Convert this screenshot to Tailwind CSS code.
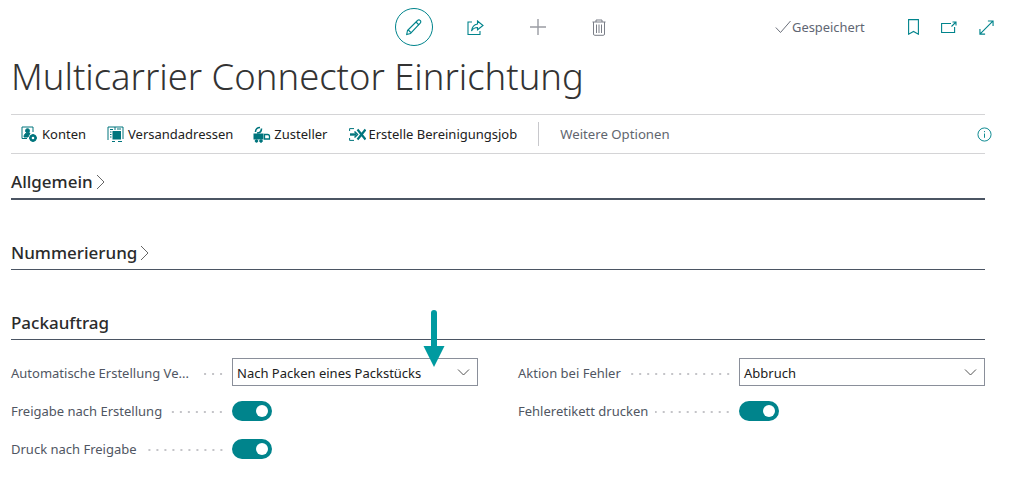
<!DOCTYPE html>
<html lang="de">
<head>
  <meta charset="UTF-8">
  <title>Multicarrier Connector Einrichtung</title>
  <script src="https://cdn.jsdelivr.net/npm/@tailwindcss/browser@4"></script>
</head>
<body class="bg-white w-[1010px] h-[488px] overflow-hidden relative font-['Noto_Sans','Open_Sans',sans-serif] text-[#212121]">
  <!-- top bar -->
  <div class="h-[54px] flex items-center">
    <div class="w-[395px] shrink-0"></div>
    <button class="w-[38px] h-[38px] rounded-full border border-[#00848c] flex items-center justify-center">
      <svg class="w-[18px] h-[18px]" viewBox="0 0 18 18" fill="none" stroke="#00848c" stroke-width="1.1"><path d="M2.500 12.500 12.500 2.500a1.800 1.800 0 0 1 2.700 0 1.800 1.800 0 0 1 0 2.700L5.500 15.500l-3.800 1Z"/><path d="M11 4l3 3M3.300 12l2.500 2.500"/></svg>
    </button>
    <svg class="w-[17px] h-[15px] ml-[34px]" viewBox="0 0 17 15" fill="none" stroke="#00848c" stroke-width="1.1"><path d="M5 2H1v12.500h12V11"/><path d="M10.500 1 16 5.500l-5.500 4.300V7.500C8 7.500 6 8.500 4.500 11 5 7.500 7 4.500 10.500 4Z"/></svg>
    <svg class="w-[18px] h-[18px] ml-[45px]" viewBox="0 0 18 18" stroke="#9a9ca3" stroke-width="1.400"><path d="M9 1v16M1 9h16"/></svg>
    <svg class="w-[14px] h-[17px] ml-[45px]" viewBox="0 0 14 17" fill="none" stroke="#7b7f88" stroke-width="1"><path d="M.5 3h13M4 3V1h6v2M1.500 3v12a1.300 1.300 0 0 0 1.300 1.300h8.400a1.300 1.300 0 0 0 1.300-1.300V3M4.500 5.500V14M7 5.500V14M9.500 5.500V14"/></svg>
    <svg class="w-[16px] h-[14px] ml-[169px]" viewBox="0 0 16 14" fill="none" stroke="#6a6f7a" stroke-width="1"><path d="M.8 7.500 5.500 12.500 15.500 1"/></svg>
    <span class="ml-[1px] pt-[2px] text-[12.9px] text-[#5f6673] whitespace-nowrap">Gespeichert</span>
    <svg class="w-[11px] h-[16px] ml-[43px]" viewBox="0 0 11 16" fill="none" stroke="#00848c" stroke-width="1.100"><path d="M.6.600h9.800v14.600L5.500 12.500.6 15.200Z"/></svg>
    <svg class="w-[16px] h-[12px] ml-[22px] mb-[1px]" viewBox="0 0 16 12" fill="none" stroke="#00848c" stroke-width="1.100"><path d="M10 2.500H.6v9h13V6M10.500 5.500 15 1M11.500 1H15v3.500"/></svg>
    <svg class="w-[15px] h-[15px] ml-[22px]" viewBox="0 0 16 16" fill="none" stroke="#00848c" stroke-width="1.200"><path d="M1 15 15 1M9.500 1H15v5.500M1 9.500V15h5.500"/></svg>
  </div>

  <div class="px-[11px] w-[996px]">
    <h1 class="text-[36.4px] leading-[42px] font-light text-[#333] mt-[1px] h-[59px] whitespace-nowrap">Multicarrier Connector Einrichtung</h1>

    <!-- action bar -->
    <div class="h-[40px] border-y border-[#d4d4d6] flex items-center text-[13px] pl-[10px]">
      <div class="flex items-center gap-[4px]">
        <svg class="w-[17px] h-[17px]" viewBox="0 0 17 17" fill="none" stroke="#00757d"><path d="M6 12.500H1V1h11v5"/><circle cx="6.500" cy="4.700" r="2" fill="#00757d"/><path d="M3 11c0-2.500 1.500-4 3.500-4H9L7 11Z" fill="#00757d"/><circle cx="12" cy="12" r="2.500" stroke-width="2.400"/><path d="M12 8v1M12 15v1M8 12h1M15 12h1" stroke-width="1.400"/></svg>
        <span class="pt-[2px]">Konten</span>
      </div>
      <div class="flex items-center gap-[3px] ml-[21px]">
        <svg class="w-[17px] h-[16px]" viewBox="0 0 17 16" fill="none" stroke="#00757d"><path d="M1 14V1h15v12M8 1v3M3 3.500h3M3 6h1.500M3 8.500h1.500M3 11h1.500M10 3h4"/><rect x="6" y="5.500" width="7.500" height="7.500" fill="#00757d"/><path d="M5 15.500h3M11 15.500h4"/></svg>
        <span class="pt-[2px] ml-[1px]">Versandadressen</span>
      </div>
      <div class="flex items-center gap-[3px] ml-[20px]">
        <svg class="w-[18px] h-[17px]" viewBox="0 0 18 17" fill="none" stroke="#00757d"><path d="M2.500 6c0-3 2-4.500 4.500-4.500M8.500 2.500c0 3-2 4.500-4.500 4.500" stroke-width="1.600"/><rect x="1" y="8" width="9" height="5" fill="#00757d"/><path d="M11.500 8.500h3a2 2 0 0 1 2 2v2.500h-5Z" stroke-width="1.300"/><circle cx="3.500" cy="15" r="1.300" fill="#00757d"/><circle cx="8" cy="15" r="1.300" fill="#00757d"/></svg>
        <span class="pt-[2px]">Zusteller</span>
      </div>
      <div class="flex items-center gap-[3px] ml-[21px]">
        <svg class="w-[17px] h-[13px]" viewBox="0 0 17 13" fill="none" stroke="#00757d"><path d="M5 .6H.6v2.400M.6 10v2.400H5"/><path d="M1 6.500h6" stroke-width="2.400"/><path d="M5.500 3.500 8.500 6.500l-3 3" stroke-width="1.500"/><path d="m8.500 1.500 8 10M16.500 1.500l-8 10" stroke-width="2.200"/></svg>
        <span class="pt-[2px]">Erstelle Bereinigungsjob</span>
      </div>
      <div class="w-px h-[24px] bg-[#c8c8cc] ml-[21px]"></div>
      <span class="ml-[21px] pt-[2px] text-[13.2px] text-[#61656e]">Weitere Optionen</span>
      <svg class="w-[15px] h-[15px] ml-auto mr-[-7px]" viewBox="0 0 16 16" fill="none" stroke="#00848c"><circle cx="8" cy="8" r="7"/><path d="M8 7v4.500M8 4.300v1.200"/></svg>
    </div>

    <!-- collapsed sections -->
    <div class="h-[46px] border-b-2 border-[#4b5563] flex items-end pb-[4px] text-[17px] font-medium text-[#2b2b2b]">
      <span>Allgemein</span>
      <svg class="w-[9px] h-[16px] ml-[3px] mb-[4px]" viewBox="0 0 9 16" fill="none" stroke="#666"><path d="m1 1 7 7-7 7"/></svg>
    </div>
    <div class="h-[70px] border-b border-[#4b5563] flex items-end pb-[4px] text-[17px] font-medium text-[#2b2b2b]">
      <span>Nummerierung</span>
      <svg class="w-[9px] h-[16px] ml-[3px] mb-[4px]" viewBox="0 0 9 16" fill="none" stroke="#666"><path d="m1 1 7 7-7 7"/></svg>
    </div>
    <div class="h-[70px] border-b border-[#4b5563] flex items-end pb-[4px] text-[17px] font-medium text-[#2b2b2b]">
      <span>Packauftrag</span>
    </div>

    <!-- fields -->
    <div class="grid grid-cols-[467px_467px] gap-x-[40px] pt-[18px] text-[13px]">
      <div class="flex flex-col">
        <div class="h-[28px] flex items-center text-[#505662]">
          <span class="whitespace-nowrap pt-[3px]">Automatische Erstellung Ve...</span>
          <span class="flex-1 ml-[11px] mr-[7px] h-[4px] mt-[3px] bg-[radial-gradient(circle,#c4c4c8_1px,transparent_1.2px)] bg-[length:8px_4px] bg-repeat-x bg-right"></span>
          <div class="w-[246px] h-[28px] shrink-0 border border-[#8a8f9a] flex items-center justify-between pl-[4px] pr-[7px] text-[#212121]">
            <span class="pt-[3px]">Nach Packen eines Packstücks</span>
            <svg class="w-[13px] h-[7px]" viewBox="0 0 13 7" fill="none" stroke="#555"><path d="m1 .5 5.500 5.500L12 .5"/></svg>
          </div>
        </div>
        <div class="h-[20px] mt-[15px] flex items-center text-[#505662]">
          <span class="whitespace-nowrap pt-[1px]">Freigabe nach Erstellung</span>
          <span class="flex-1 ml-[9px] mr-[7px] h-[4px] mt-[2px] bg-[radial-gradient(circle,#c4c4c8_1px,transparent_1.2px)] bg-[length:8px_4px] bg-repeat-x bg-right"></span>
          <div class="w-[246px] shrink-0">
            <div class="w-[40px] h-[20px] rounded-full bg-[#00848c] flex items-center justify-end pr-[4px]"><div class="w-[12px] h-[12px] rounded-full bg-white"></div></div>
          </div>
        </div>
        <div class="h-[20px] mt-[18px] flex items-center text-[#505662]">
          <span class="whitespace-nowrap pt-[1px]">Druck nach Freigabe</span>
          <span class="flex-1 ml-[9px] mr-[7px] h-[4px] mt-[2px] bg-[radial-gradient(circle,#c4c4c8_1px,transparent_1.2px)] bg-[length:8px_4px] bg-repeat-x bg-right"></span>
          <div class="w-[246px] shrink-0">
            <div class="w-[40px] h-[20px] rounded-full bg-[#00848c] flex items-center justify-end pr-[4px]"><div class="w-[12px] h-[12px] rounded-full bg-white"></div></div>
          </div>
        </div>
      </div>
      <div class="flex flex-col">
        <div class="h-[28px] flex items-center text-[#505662]">
          <span class="whitespace-nowrap pt-[3px]">Aktion bei Fehler</span>
          <span class="flex-1 ml-[7px] mr-[7px] h-[4px] mt-[3px] bg-[radial-gradient(circle,#c4c4c8_1px,transparent_1.2px)] bg-[length:8px_4px] bg-repeat-x bg-right"></span>
          <div class="w-[246px] h-[28px] shrink-0 border border-[#8a8f9a] flex items-center justify-between pl-[4px] pr-[7px] text-[#212121]">
            <span class="pt-[3px]">Abbruch</span>
            <svg class="w-[13px] h-[7px]" viewBox="0 0 13 7" fill="none" stroke="#555"><path d="m1 .5 5.500 5.500L12 .5"/></svg>
          </div>
        </div>
        <div class="h-[20px] mt-[15px] flex items-center text-[#505662]">
          <span class="whitespace-nowrap pt-[1px]">Fehleretikett drucken</span>
          <span class="flex-1 ml-[7px] mr-[7px] h-[4px] mt-[2px] bg-[radial-gradient(circle,#c4c4c8_1px,transparent_1.2px)] bg-[length:8px_4px] bg-repeat-x bg-right"></span>
          <div class="w-[246px] shrink-0">
            <div class="w-[40px] h-[20px] rounded-full bg-[#00848c] flex items-center justify-end pr-[4px]"><div class="w-[12px] h-[12px] rounded-full bg-white"></div></div>
          </div>
        </div>
      </div>
    </div>
  </div>

  <!-- annotation arrow over the dropdown -->
  <svg class="absolute left-[422px] top-[307px] w-[24px] h-[62px]" viewBox="0 0 24 62">
    <path d="M12 6v36" stroke="#009aa0" stroke-width="6" stroke-linecap="round"/>
    <path d="M1.500 39h21L12 60Z" fill="#009aa0"/>
  </svg>
</body>
</html>
